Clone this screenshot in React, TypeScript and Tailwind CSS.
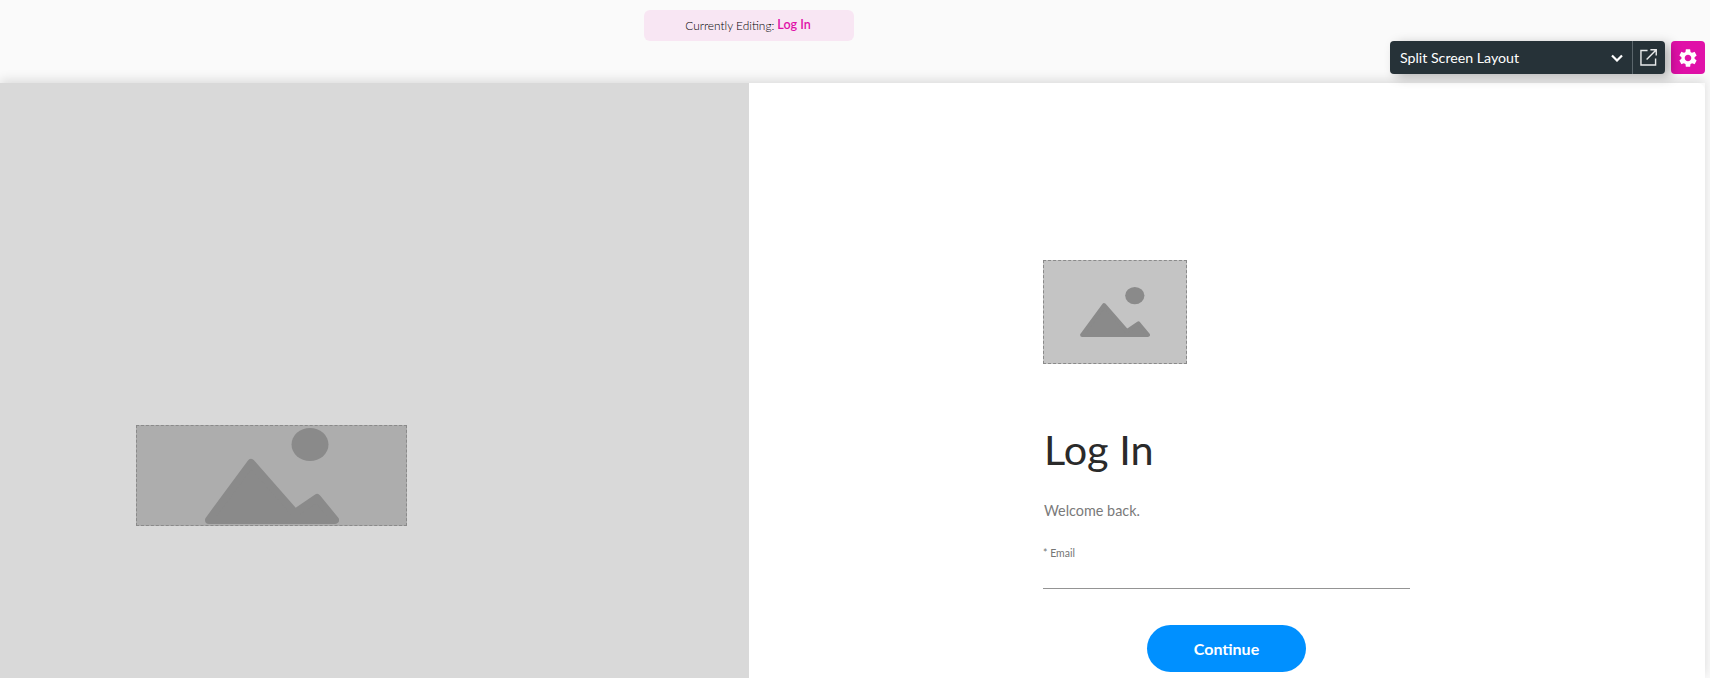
import React from "react";
import { MdSettings } from "react-icons/md";

const font = "font-['Lato','Noto_Sans',sans-serif]";

const PlaceholderIcon = ({ className }: { className: string }) => (
  <svg viewBox="0 0 134 96" className={className} fill="#8a8a8a">
    <ellipse cx="105" cy="16.5" rx="18.5" ry="16.5" />
    <path
      d="M4 92 L46 35 L90 85 L112 70 L130 92 Z"
      stroke="#8a8a8a"
      strokeWidth="8"
      strokeLinejoin="round"
    />
  </svg>
);

const Header = () => (
  <div className="flex h-[83px] shrink-0 items-start bg-[#fafafa]">
    <div className="mt-[10px] ml-[644px] flex h-[31px] w-[210px] items-center justify-center rounded-md bg-[#f8e6f3] pr-[2px] text-[11.9px] text-black">
      <span className="font-light">Currently Editing:</span>
      <span className="ml-[3px] text-[12.5px] font-semibold text-[#e010a8]">Log In</span>
    </div>
    <div className="mt-[41px] mr-[5px] ml-auto flex items-center gap-[6px]">
      <div className="relative z-10 flex h-[33px] w-[275px] items-center rounded bg-[#263238] pl-[10px] text-white shadow-[6px_3px_12px_rgba(0,0,0,0.28)]">
        <span className="flex-1 text-[14.2px]">Split Screen Layout</span>
        <svg viewBox="0 0 12 8" className="mr-[9px] h-[8px] w-[12px]" fill="none" stroke="white" strokeWidth="2.2">
          <path d="M1 1.5 L6 6.5 L11 1.5" />
        </svg>
        <div className="flex h-full w-[33px] items-center justify-center border-l border-[#5b666c]">
          <svg viewBox="0 0 18 18" className="-ml-[2px] h-[17px] w-[17px]" fill="none" stroke="#e8eaeb" strokeWidth="1.5">
            <path d="M8 1.5 H1 V17 H16.5 V10" />
            <path d="M7 11 L17 1 M11 0.8 H17.2 V7" />
          </svg>
        </div>
      </div>
      <div className="flex h-[33px] w-[34px] items-center justify-center rounded bg-[#e010a8] text-white">
        <MdSettings className="h-[22px] w-[22px]" />
      </div>
    </div>
  </div>
);

const App = () => (
  <div className={`flex h-[678px] flex-col overflow-hidden bg-[#fafafa] ${font}`}>
    <Header />
    <div className="mr-[5px] flex flex-1 shadow-[0_-3px_10px_rgba(0,0,0,0.12)]">
      <div className="w-[749px] bg-[#d9d9d9] pt-[342px] pl-[136px]">
        <div className="flex h-[101px] w-[271px] items-center justify-center border border-dashed border-[#8a8a8a] bg-[#adadad]">
          <PlaceholderIcon className="h-[96px] w-[134px]" />
        </div>
      </div>
      <div className="flex-1 rounded-tr-lg bg-white pt-[177px] pl-[294px]">
        <div className="w-[367px]">
          <div className="flex h-[104px] w-[144px] items-center justify-center border border-dashed border-[#8a8a8a] bg-[#c4c4c4]">
            <PlaceholderIcon className="h-[50px] w-[70px]" />
          </div>
          <h1 className="mt-[61px] ml-[1px] text-[41.4px] leading-[48px] text-[#2a2a2a]">Log In</h1>
          <p className="mt-[28px] ml-[1px] text-[14.4px] leading-[20px] text-[#7a7a7a]">Welcome back.</p>
          <label className="mt-[24px] block text-[10.5px] leading-[16px] text-[#757575]">* Email</label>
          <div className="mt-[27px] h-[1px] bg-[#949494]" />
          <div className="mt-[36px] flex justify-center">
            <button className="h-[47px] w-[159px] rounded-full bg-[#0090ff] text-[16px] font-bold text-white">
              Continue
            </button>
          </div>
        </div>
      </div>
    </div>
  </div>
);

export default App;
